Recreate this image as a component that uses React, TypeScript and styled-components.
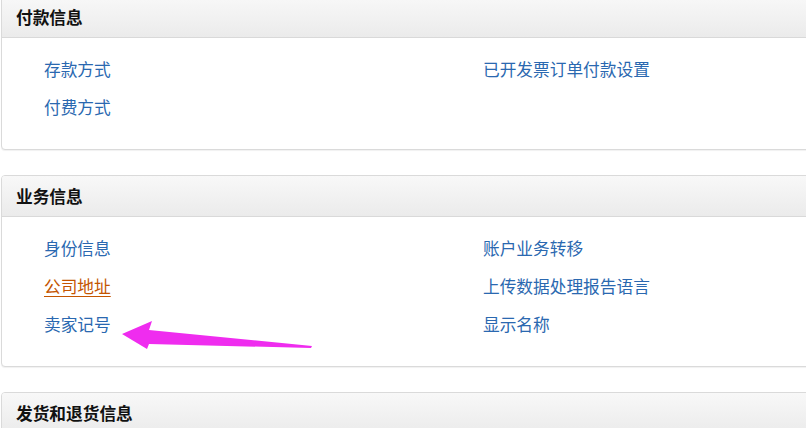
import React from 'react';
import styled, { createGlobalStyle } from 'styled-components';

const GlobalStyle = createGlobalStyle`
  html, body {
    margin: 0;
    padding: 0;
    background: #fff;
    overflow: hidden;
  }
  body {
    font-family: "Noto Sans CJK SC", "Liberation Sans", sans-serif;
  }
`;

type LinkItem = { label: string; active?: boolean };

type Section = {
  title: string;
  left: LinkItem[];
  right: LinkItem[];
};

const sections: Section[] = [
  {
    title: '付款信息',
    left: [{ label: '存款方式' }, { label: '付费方式' }],
    right: [{ label: '已开发票订单付款设置' }],
  },
  {
    title: '业务信息',
    left: [{ label: '身份信息' }, { label: '公司地址', active: true }, { label: '卖家记号' }],
    right: [{ label: '账户业务转移' }, { label: '上传数据处理报告语言' }, { label: '显示名称' }],
  },
  {
    title: '发货和退货信息',
    left: [],
    right: [],
  },
];

const App: React.FC = () => {
  return (
    <Page>
      <GlobalStyle />
      {sections.map((s) => (
        <Card key={s.title}>
          <CardHeader>{s.title}</CardHeader>
          {(s.left.length > 0 || s.right.length > 0) && (
            <CardBody>
              <Column>
                {s.left.map((l) => (
                  <LinkText key={l.label} $active={l.active}>
                    {l.label}
                  </LinkText>
                ))}
              </Column>
              <Column>
                {s.right.map((l) => (
                  <LinkText key={l.label} $active={l.active}>
                    {l.label}
                  </LinkText>
                ))}
              </Column>
            </CardBody>
          )}
        </Card>
      ))}
      <Arrow width="200" height="36" viewBox="0 0 200 36">
        <polygon points="2,13 32,0 29,9 192,25 191,27 29,23 27,28" fill="#ef2cef" />
      </Arrow>
    </Page>
  );
};

export default App;

const Page = styled.div`
  position: relative;
  width: 806px;
  height: 432px;
  margin-top: -4px;
  padding-left: 1px;
  display: flex;
  flex-direction: column;
  gap: 25px;
`;

const Card = styled.section`
  width: 830px;
  border: 1px solid #dadada;
  border-radius: 4px;
  background: #fff;
  box-shadow: 0 1px 1px rgba(0, 0, 0, 0.06);
  overflow: hidden;
  flex-shrink: 0;
`;

const CardHeader = styled.h2`
  margin: 0;
  height: 40px;
  padding-left: 14px;
  display: flex;
  align-items: center;
  font-size: 16.7px;
  font-weight: 700;
  color: #111;
  background: linear-gradient(to bottom, #f8f8f8, #ebebeb);
  border-bottom: 1px solid #d9d9d9;
`;

const CardBody = styled.div`
  display: grid;
  grid-template-columns: 439px 1fr;
  padding: 12px 0 23px 42px;
`;

const Column = styled.div`
  display: flex;
  flex-direction: column;
`;

const LinkText = styled.a<{ $active?: boolean }>`
  display: block;
  width: fit-content;
  height: 38px;
  line-height: 38px;
  font-size: 16.7px;
  color: ${(p) => (p.$active ? '#c45500' : '#2a68b0')};
  text-decoration: ${(p) => (p.$active ? 'underline' : 'none')};
  text-underline-offset: 3px;
  cursor: pointer;
`;

const Arrow = styled.svg`
  position: absolute;
  left: 120px;
  top: 325px;
`;
